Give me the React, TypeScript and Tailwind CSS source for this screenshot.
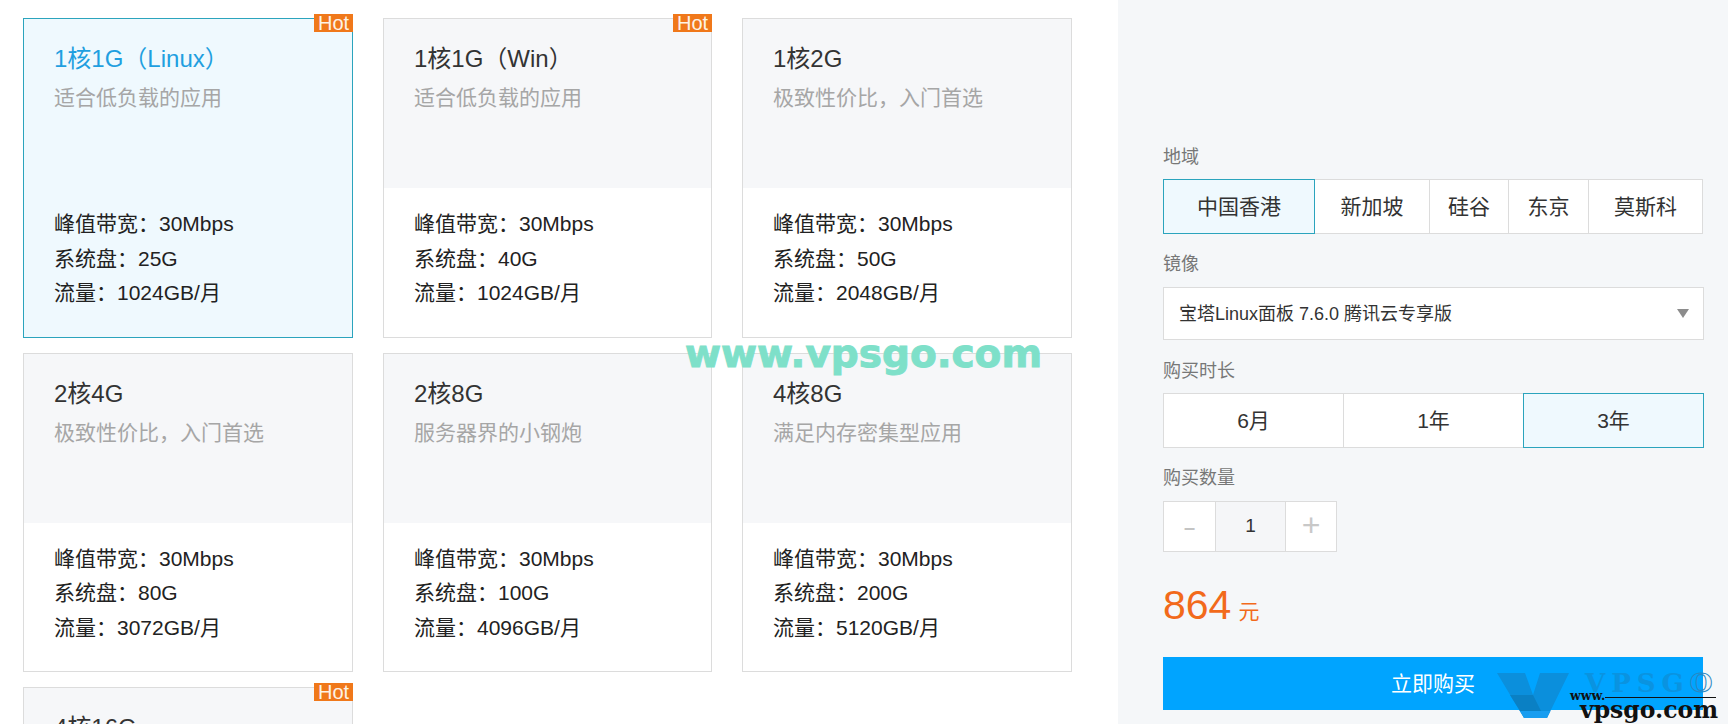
const SANS = "font-['Liberation_Sans','Noto_Sans_CJK_SC',sans-serif]";

type Plan = { title: string; desc: string; specs: string[]; hot?: boolean; active?: boolean };

const plans: Plan[] = [
  { title: "1核1G（Linux）", desc: "适合低负载的应用", specs: ["峰值带宽：30Mbps", "系统盘：25G", "流量：1024GB/月"], hot: true, active: true },
  { title: "1核1G（Win）", desc: "适合低负载的应用", specs: ["峰值带宽：30Mbps", "系统盘：40G", "流量：1024GB/月"], hot: true },
  { title: "1核2G", desc: "极致性价比，入门首选", specs: ["峰值带宽：30Mbps", "系统盘：50G", "流量：2048GB/月"] },
  { title: "2核4G", desc: "极致性价比，入门首选", specs: ["峰值带宽：30Mbps", "系统盘：80G", "流量：3072GB/月"] },
  { title: "2核8G", desc: "服务器界的小钢炮", specs: ["峰值带宽：30Mbps", "系统盘：100G", "流量：4096GB/月"] },
  { title: "4核8G", desc: "满足内存密集型应用", specs: ["峰值带宽：30Mbps", "系统盘：200G", "流量：5120GB/月"] },
  { title: "4核16G", desc: "满足内存密集型应用", specs: ["峰值带宽：30Mbps", "系统盘：300G", "流量：6144GB/月"], hot: true },
];

function Card({ plan }: { plan: Plan }) {
  return (
    <div className={`relative h-[319.5px] border ${plan.active ? "border-[#2ba4bd] bg-[#eff9fe]" : "border-[#dcdcdc] bg-white"}`}>
      {plan.hot && (
        <div className="absolute -right-px top-[-5px] flex h-[18px] w-[39px] items-center justify-center bg-[#f0781a] text-[20px] leading-[18px] text-[#fdf3e6]">
          Hot
        </div>
      )}
      <div className={`h-[169px] pl-[30px] pt-[22px] ${plan.active ? "" : "bg-[#f6f7f9]"}`}>
        <div className={`text-[24px] leading-[36px] ${plan.active ? "text-[#1f9fe0]" : "text-[#333333]"}`}>{plan.title}</div>
        <div className="mt-[3px] text-[21px] leading-[36px] text-[#a6a6a6]">{plan.desc}</div>
      </div>
      <div className="pl-[30px] pt-[19px] text-[21px] leading-[34.5px] text-[#222222]">
        {plan.specs.map((s) => (
          <div key={s}>{s}</div>
        ))}
      </div>
    </div>
  );
}

function Label({ children }: { children: string }) {
  return <div className="h-[24px] text-[18px] leading-[24px] text-[#777777]">{children}</div>;
}

function Seg({ label, width, active, first }: { label: string; width: string; active?: boolean; first?: boolean }) {
  return (
    <div
      className={`flex h-full items-center justify-center border text-[21px] text-[#333333] ${width} ${first ? "" : "-ml-px"} ${
        active ? "relative z-10 border-[#2ba4bd] bg-[#eff9fe]" : "border-[#dcdcdc] bg-white"
      }`}
    >
      {label}
    </div>
  );
}

export default function App() {
  return (
    <div className={`relative flex h-[724px] w-[1728px] overflow-hidden bg-white ${SANS}`}>
      <div className="w-[1118px] shrink-0 pl-[23px] pt-[18px]">
        <div className="grid grid-cols-[330px_329px_330px] gap-x-[30px] gap-y-[15px]">
          {plans.map((p) => (
            <Card key={p.title} plan={p} />
          ))}
        </div>
      </div>

      <div className="flex-1 bg-[#f5f7f9] pl-[45px] pr-[25px] pt-[145px]">
        <Label>地域</Label>
        <div className="mt-[10px] flex h-[55px]">
          <Seg first active label="中国香港" width="w-[152px]" />
          <Seg label="新加坡" width="w-[116px]" />
          <Seg label="硅谷" width="w-[80px]" />
          <Seg label="东京" width="w-[81px]" />
          <Seg label="莫斯科" width="w-[115px]" />
        </div>

        <div className="mt-[18px]">
          <Label>镜像</Label>
        </div>
        <div className="mt-[11px] flex h-[53px] items-center justify-between border border-[#dcdcdc] bg-white pl-[15px] pr-[14px]">
          <span className="relative top-[1px] text-[18px] text-[#333333]">宝塔Linux面板 7.6.0 腾讯云专享版</span>
          <svg width="12" height="9" viewBox="0 0 12 9" aria-hidden="true">
            <path d="M0 0H12L6 9Z" fill="#8c8c8c" />
          </svg>
        </div>

        <div className="mt-[19px]">
          <Label>购买时长</Label>
        </div>
        <div className="mt-[10px] flex h-[55px]">
          <Seg first label="6月" width="w-[181px]" />
          <Seg label="1年" width="w-[181px]" />
          <Seg active label="3年" width="w-[181px]" />
        </div>

        <div className="mt-[18px]">
          <Label>购买数量</Label>
        </div>
        <div className="mt-[11px] flex h-[51px] w-[174px] border border-[#dcdcdc] bg-white">
          <div className="flex w-[51px] items-center justify-center text-[20px] font-bold text-[#c4c4c4]">–</div>
          <div className="flex w-[71px] items-center justify-center border-x border-[#dcdcdc] bg-[#f5f6f8] text-[19px] text-[#333333]">1</div>
          <div className="relative -top-[2px] flex flex-1 items-center justify-center text-[32px] text-[#c8c8c8]">+</div>
        </div>

        <div className="mt-[26px] flex h-[54px] items-baseline text-[#f26a1b]">
          <span className="text-[41px] leading-[54px]">864</span>
          <span className="ml-[7px] text-[21px]">元</span>
        </div>

        <div className="mt-[25px] flex h-[53px] w-[540px] items-center justify-center bg-[#00a4ff] text-[21px] text-white">立即购买</div>
      </div>

      <div className="pointer-events-none absolute left-[685px] top-[332px] whitespace-nowrap font-['DejaVu_Sans'] text-[39px] font-bold leading-[44px] text-[#7ee0c9] [-webkit-text-stroke:1px_#7ee0c9]">
        www.vpsgo.com
      </div>

      <div className="pointer-events-none absolute left-[1497px] top-[673px] h-[51px] w-[231px]">
        <svg className="absolute left-0 top-0" width="72" height="45" viewBox="0 0 72 45" aria-hidden="true">
          <path d="M0 0H28L36 22L43 0H72L50 45H27Z" fill="#0b8fdc" />
          <path d="M13 22H36L44 38H23Z" fill="#0a80c4" />
          <path d="M23 38H53.4L50 45H27Z" fill="#189df0" />
        </svg>
        <div className="absolute left-[88px] top-[-3px] whitespace-nowrap font-['DejaVu_Serif'] text-[26px] font-bold leading-[26px] tracking-[6px] text-[#0a93e0]">
          VPSG<span className="text-transparent [-webkit-text-stroke:1px_#2a86c2]">O</span>
        </div>
        <div className="absolute left-[73px] top-[17px] font-['DejaVu_Serif'] text-[12.5px] font-bold leading-[12px] text-[#111111]">www.</div>
        <div className="absolute left-[108px] top-[24px] h-px w-[111px] bg-[#111111]" />
        <div className="absolute left-[83px] top-[26px] whitespace-nowrap font-['DejaVu_Serif'] text-[23.5px] font-bold leading-[22px] text-[#111111]">vpsgo.com</div>
      </div>
    </div>
  );
}
